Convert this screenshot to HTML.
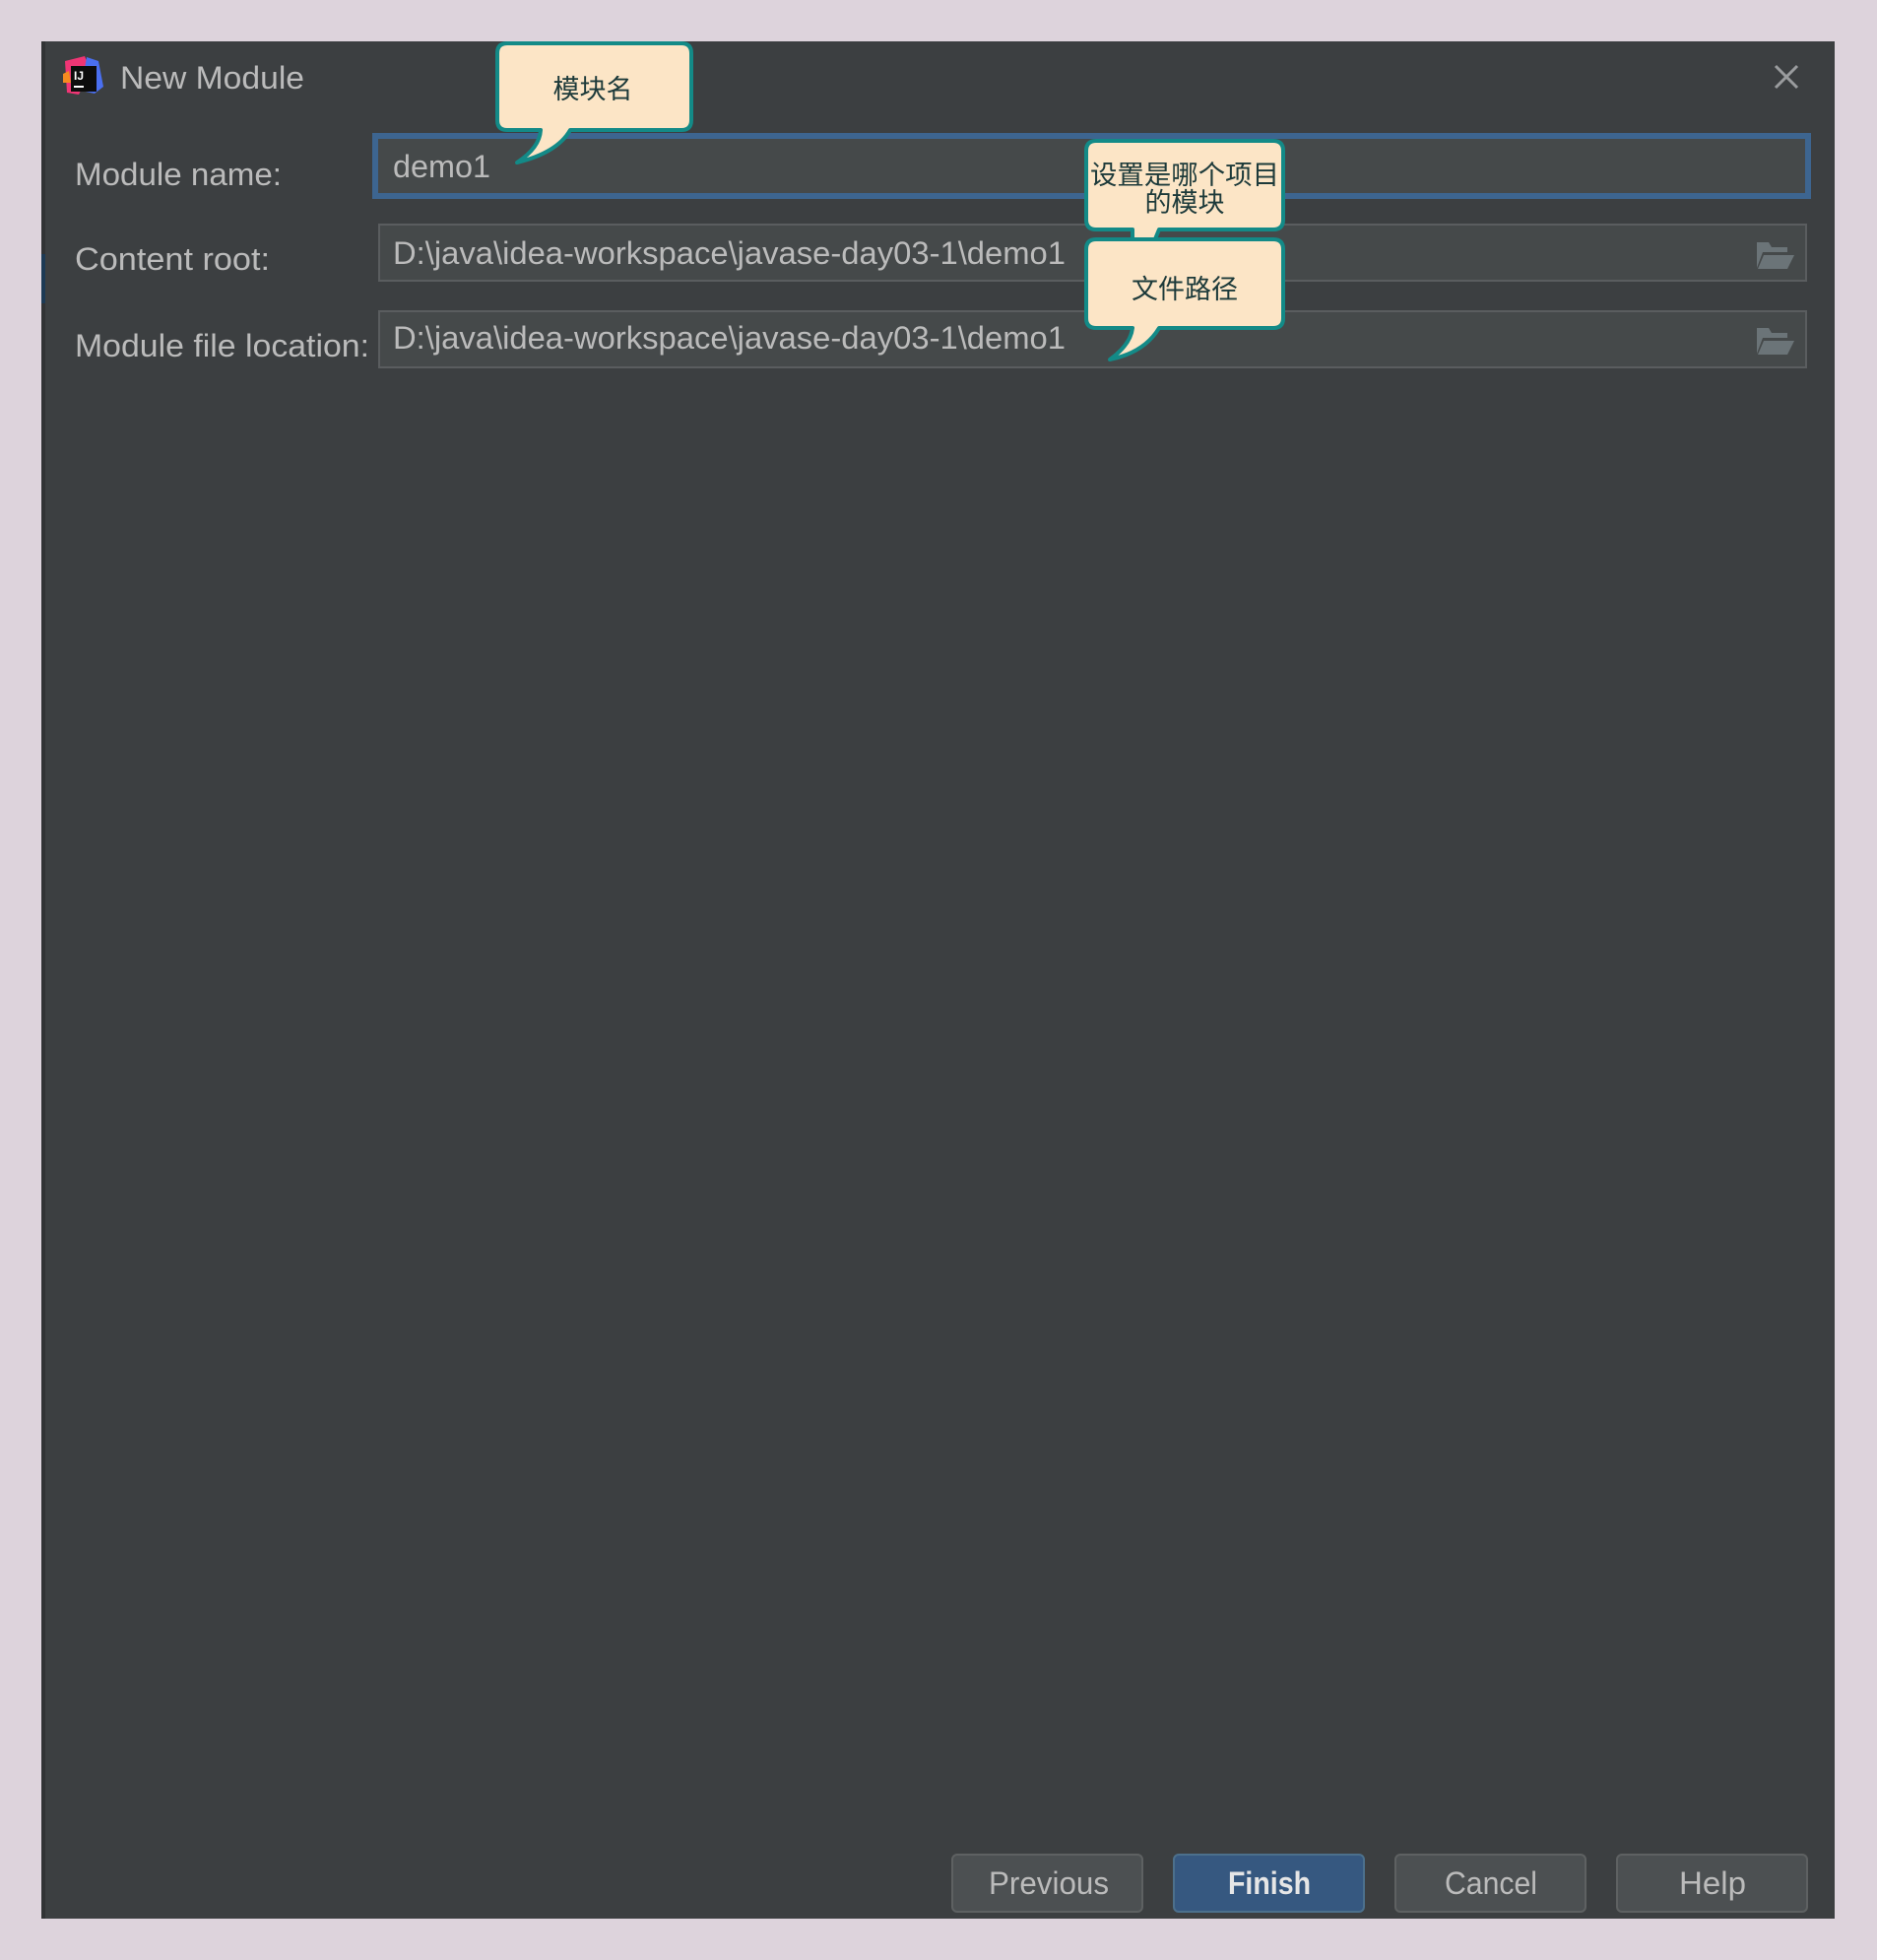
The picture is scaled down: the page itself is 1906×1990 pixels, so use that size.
<!DOCTYPE html>
<html><head><meta charset="utf-8"><style>
html,body{margin:0;padding:0;background:#ddd3dc;width:1906px;height:1990px;overflow:hidden}
svg{display:block}
.l{font-family:"Liberation Sans",sans-serif;fill:#bbbbbb;font-size:32px}
.c{font-family:"Liberation Sans","Noto Sans CJK SC",sans-serif;fill:#1d3a3a;font-size:27px}
</style></head><body>
<svg width="1906" height="1990" viewBox="0 0 1906 1990" xmlns="http://www.w3.org/2000/svg">
<rect x="0" y="0" width="1906" height="1990" fill="#ddd3dc"/>
<rect x="42" y="42" width="1821" height="1906" fill="#3c3f41"/>
<rect x="42" y="42" width="4" height="1906" fill="#313335"/>
<rect x="42" y="258" width="4" height="50" fill="#1d3a55"/>
<!-- icon -->
<path d="M66 62 L86 57 L92 72 L80 96 L68 94 Z" fill="#f03575"/>
<path d="M88 58 L100 62 L105 88 L96 95 L82 92 Z" fill="#4a6ff0"/>
<path d="M64 75 L70 72 L72 84 L64 84 Z" fill="#f58a1f"/>
<rect x="72" y="67" width="26" height="26" fill="#0d0d0d"/>
<text x="75" y="81" font-family="Liberation Sans,sans-serif" font-size="12" font-weight="bold" fill="#fff">IJ</text>
<rect x="75" y="87" width="10" height="2" fill="#fff"/>
<text class="l" x="122" y="90" textLength="187" lengthAdjust="spacingAndGlyphs">New Module</text>
<path d="M1803 67 L1825 89 M1825 67 L1803 89" stroke="#9a9c9e" stroke-width="3"/>
<!-- labels -->
<text class="l" x="76" y="188" textLength="210" lengthAdjust="spacingAndGlyphs">Module name:</text>
<text class="l" x="76" y="274" textLength="198" lengthAdjust="spacingAndGlyphs">Content root:</text>
<text class="l" x="76" y="362" textLength="299" lengthAdjust="spacingAndGlyphs">Module file location:</text>
<!-- fields -->
<rect x="381" y="138" width="1455" height="61" fill="#45494a" stroke="#3d6590" stroke-width="6"/>
<rect x="385" y="228" width="1449" height="57" fill="#45494a" stroke="#5a5d5f" stroke-width="2"/>
<rect x="385" y="316" width="1449" height="57" fill="#45494a" stroke="#5a5d5f" stroke-width="2"/>
<text class="l" x="399" y="180" textLength="99" lengthAdjust="spacingAndGlyphs">demo1</text>
<text class="l" x="399" y="268" textLength="683" lengthAdjust="spacingAndGlyphs">D:\java\idea-workspace\javase-day03-1\demo1</text>
<text class="l" x="399" y="354" textLength="683" lengthAdjust="spacingAndGlyphs">D:\java\idea-workspace\javase-day03-1\demo1</text>
<!-- folders -->
<g fill="#6b7478">
<path d="M1784 246 L1796 246 L1799 251 L1815 251 L1815 256 L1790 256 L1784 272 Z"/>
<path d="M1791 259 L1822 259 L1815 273 L1785 273 Z"/>
<path d="M1784 333 L1796 333 L1799 338 L1815 338 L1815 343 L1790 343 L1784 359 Z"/>
<path d="M1791 346 L1822 346 L1815 360 L1785 360 Z"/>
</g>
<!-- callout 1 -->
<g fill="#fce5c6" stroke="#138a87" stroke-width="4" stroke-linejoin="round">
<path d="M515 44 L692 44 Q702 44 702 54 L702 122 Q702 132 692 132 L579 132 Q566 155 525 165 Q548 150 549 132 L515 132 Q505 132 505 122 L505 54 Q505 44 515 44 Z"/>
<path d="M1113 143 L1293 143 Q1303 143 1303 153 L1303 223 Q1303 233 1293 233 L1177 233 L1170 250 L1150 250 L1150 233 L1113 233 Q1103 233 1103 223 L1103 153 Q1103 143 1113 143 Z"/>
<path d="M1113 243 L1293 243 Q1303 243 1303 253 L1303 323 Q1303 333 1293 333 L1177 333 Q1162 358 1127 365 Q1148 350 1150 333 L1113 333 Q1103 333 1103 323 L1103 253 Q1103 243 1113 243 Z"/>
</g>
<text class="c" x="602" y="100" text-anchor="middle">模块名</text>
<text class="c" x="1203" y="187" text-anchor="middle" textLength="192" lengthAdjust="spacingAndGlyphs">设置是哪个项目</text>
<text class="c" x="1203" y="215" text-anchor="middle">的模块</text>
<text class="c" x="1203" y="303" text-anchor="middle">文件路径</text>
<!-- buttons -->
<rect x="967" y="1883" width="193" height="58" rx="5" fill="#4c5052" stroke="#5e6162" stroke-width="2"/>
<rect x="1192" y="1883" width="193" height="58" rx="5" fill="#365880" stroke="#4c708c" stroke-width="2"/>
<rect x="1417" y="1883" width="193" height="58" rx="5" fill="#4c5052" stroke="#5e6162" stroke-width="2"/>
<rect x="1642" y="1883" width="193" height="58" rx="5" fill="#4c5052" stroke="#5e6162" stroke-width="2"/>
<text class="l" x="1004" y="1923" textLength="122" lengthAdjust="spacingAndGlyphs">Previous</text>
<text class="l" x="1247" y="1923" textLength="84" lengthAdjust="spacingAndGlyphs" font-weight="bold" style="fill:#e6e6e6">Finish</text>
<text class="l" x="1467" y="1923" textLength="94" lengthAdjust="spacingAndGlyphs">Cancel</text>
<text class="l" x="1705" y="1923" textLength="68" lengthAdjust="spacingAndGlyphs">Help</text>
</svg>
</body></html>
